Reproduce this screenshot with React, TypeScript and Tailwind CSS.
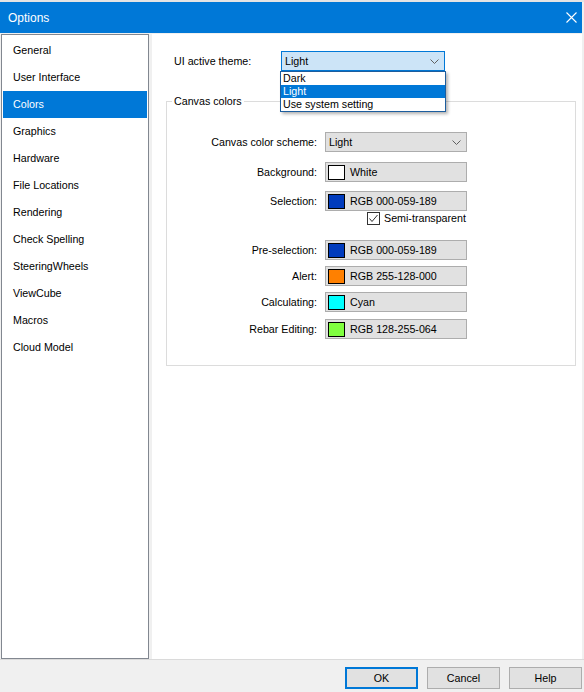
import { useState } from "react";

const navItems = [
  "General",
  "User Interface",
  "Colors",
  "Graphics",
  "Hardware",
  "File Locations",
  "Rendering",
  "Check Spelling",
  "SteeringWheels",
  "ViewCube",
  "Macros",
  "Cloud Model",
];

const colorRows = [
  { label: "Pre-selection:", swatch: "bg-[#003bbd]", text: "RGB 000-059-189", mt: "mt-[15px]" },
  { label: "Alert:", swatch: "bg-[#ff8000]", text: "RGB 255-128-000", mt: "mt-[6px]" },
  { label: "Calculating:", swatch: "bg-[#00ffff]", text: "Cyan", mt: "mt-[6px]" },
  { label: "Rebar Editing:", swatch: "bg-[#80ff40]", text: "RGB 128-255-064", mt: "mt-[7px]" },
];

function Chevron({ className = "" }: { className?: string }) {
  return (
    <svg width="9" height="5" viewBox="0 0 9 5" className={className}>
      <path d="M0.5 0.5 L4.5 4.5 L8.5 0.5" fill="none" stroke="#606060" strokeWidth="1" />
    </svg>
  );
}

function ColorField({ swatch, text }: { swatch: string; text: string }) {
  return (
    <div className="w-[142px] h-[20px] bg-[#e1e1e1] border border-[#adadad] flex items-center pl-[2px]">
      <div className={`w-[17px] h-[15px] border border-black ${swatch}`} />
      <span className="ml-[5px]">{text}</span>
    </div>
  );
}

function Row({ label, children, mt = "" }: { label: string; children: React.ReactNode; mt?: string }) {
  return (
    <div className={`flex items-center h-[20px] ${mt}`}>
      <div className="w-[150px] text-right">{label}</div>
      <div className="ml-[8px]">{children}</div>
    </div>
  );
}

export default function App() {
  const [active, setActive] = useState("Colors");
  const [semi, setSemi] = useState(true);

  return (
    <div
      className="w-[584px] h-[692px] bg-[#f0f0f0] flex flex-col text-[10.7px] text-black overflow-hidden"
      style={{ fontFamily: '"Segoe UI", "Liberation Sans", Arial, sans-serif' }}
    >
      <div className="h-[2px] bg-[#e4e4e4]" />
      {/* title bar */}
      <div className="h-[31px] bg-[#0078d7] flex items-center justify-between pl-[8px] pr-[5px] mr-[2px]">
        <span className="text-white text-[12px]">Options</span>
        <svg width="11" height="11" viewBox="0 0 11 11">
          <path d="M0.5 0.5 L10.5 10.5 M10.5 0.5 L0.5 10.5" stroke="white" strokeWidth="1.1" />
        </svg>
      </div>

      <div className="flex-1 flex pt-[1px] min-h-0">
        {/* sidebar */}
        <div className="ml-[1px] w-[148px] bg-white border border-[#828790] pt-[2px] px-[1px]">
          {navItems.map((item) => (
            <div
              key={item}
              onClick={() => setActive(item)}
              className={`h-[27px] flex items-center pl-[10px] cursor-default ${
                active === item ? "bg-[#0078d7] text-white" : ""
              }`}
            >
              {item}
            </div>
          ))}
        </div>

        {/* content */}
        <div className="ml-[3px] mr-[2px] flex-1 bg-white relative pt-[17px]">
          <div className="flex items-center pl-[22px]">
            <span className="w-[107px]">UI active theme:</span>
            <div className="w-[164px] h-[20px] bg-[#cce4f7] border border-[#0078d7] flex items-center justify-between pl-[3px] pr-[5px]">
              <span>Light</span>
              <Chevron />
            </div>
          </div>

          <fieldset className="ml-[14px] w-[410px] mt-[24px] border border-[#dcdcdc] pb-[26px]">
            <legend className="ml-[5px] px-[2px] leading-[13px]">Canvas colors</legend>
            <div className="pt-[24px]">
              <Row label="Canvas color scheme:">
                <div className="w-[142px] h-[20px] bg-[#e1e1e1] border border-[#adadad] flex items-center justify-between pl-[3px] pr-[5px]">
                  <span>Light</span>
                  <Chevron />
                </div>
              </Row>
              <Row label="Background:" mt="mt-[10px]">
                <ColorField swatch="bg-white" text="White" />
              </Row>
              <Row label="Selection:" mt="mt-[9px]">
                <ColorField swatch="bg-[#003bbd]" text="RGB 000-059-189" />
              </Row>
              <div className="flex items-center mt-[1px] h-[13px] pl-[200px]">
                <button
                  type="button"
                  onClick={() => setSemi(!semi)}
                  className="w-[13px] h-[13px] border border-[#333333] bg-white flex items-center justify-center"
                >
                  {semi && (
                    <svg width="11" height="11" viewBox="0 0 11 11">
                      <path d="M1.5 5.5 L4 8.5 L9.5 2" fill="none" stroke="#333333" strokeWidth="1" />
                    </svg>
                  )}
                </button>
                <span className="ml-[4px]">Semi-transparent</span>
              </div>
              {colorRows.map((r) => (
                <Row key={r.label} label={r.label} mt={r.mt}>
                  <ColorField swatch={r.swatch} text={r.text} />
                </Row>
              ))}
            </div>
          </fieldset>

          {/* open dropdown list */}
          <div className="absolute left-[128px] top-[37px] w-[166px] bg-white border border-[#1c5d9e] shadow-[2px_2px_3px_rgba(0,0,0,0.3)]">
            <div className="h-[13px] leading-[13px] pl-[2px]">Dark</div>
            <div className="h-[13px] leading-[13px] pl-[2px] bg-[#0078d7] text-white">Light</div>
            <div className="h-[13px] leading-[13px] pl-[2px]">Use system setting</div>
          </div>
        </div>
      </div>

      {/* bottom bar */}
      <div className="h-[33px] border-t border-[#dadada] flex justify-end items-start pt-[7px] pr-[2px] gap-[9px]">
        <button type="button" className="w-[73px] h-[22px] bg-[#e1e1e1] border-2 border-[#0078d7]">
          OK
        </button>
        <button type="button" className="w-[73px] h-[22px] bg-[#e1e1e1] border border-[#adadad]">
          Cancel
        </button>
        <button type="button" className="w-[73px] h-[22px] bg-[#e1e1e1] border border-[#adadad]">
          Help
        </button>
      </div>
    </div>
  );
}
